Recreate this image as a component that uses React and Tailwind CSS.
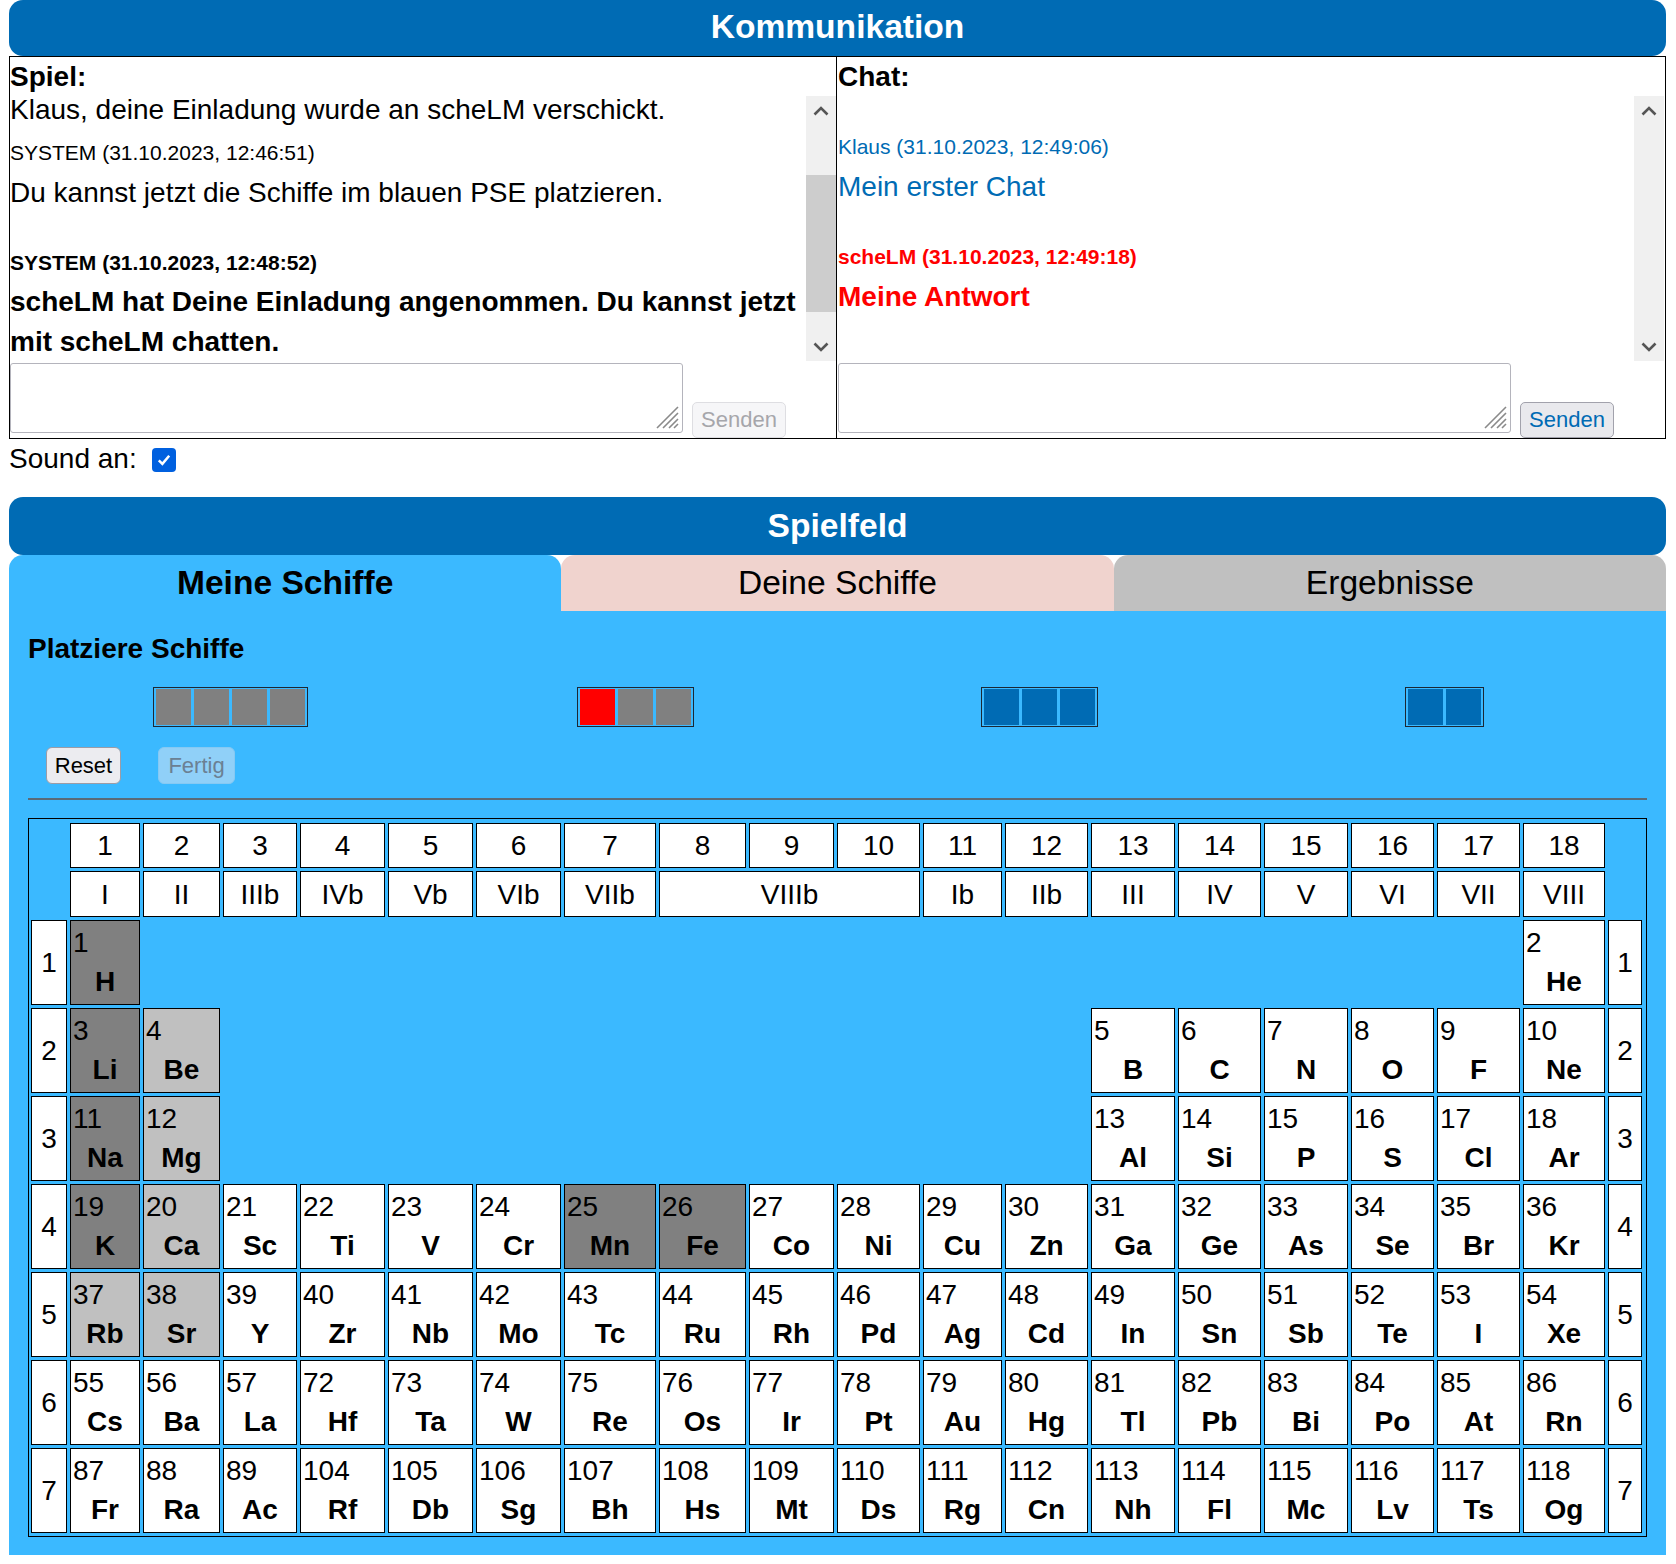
import React from 'react';

const DARK = new Set([1, 3, 11, 19, 25, 26]);
const LIGHT = new Set([4, 12, 20, 37, 38]);

const GROUPS = ['1', '2', '3', '4', '5', '6', '7', '8', '9', '10', '11', '12', '13', '14', '15', '16', '17', '18'];

const P4 = ['K', 'Ca', 'Sc', 'Ti', 'V', 'Cr', 'Mn', 'Fe', 'Co', 'Ni', 'Cu', 'Zn', 'Ga', 'Ge', 'As', 'Se', 'Br', 'Kr'];
const P5 = ['Rb', 'Sr', 'Y', 'Zr', 'Nb', 'Mo', 'Tc', 'Ru', 'Rh', 'Pd', 'Ag', 'Cd', 'In', 'Sn', 'Sb', 'Te', 'I', 'Xe'];
const P6 = ['Cs', 'Ba', 'La', 'Hf', 'Ta', 'W', 'Re', 'Os', 'Ir', 'Pt', 'Au', 'Hg', 'Tl', 'Pb', 'Bi', 'Po', 'At', 'Rn'];
const P7 = ['Fr', 'Ra', 'Ac', 'Rf', 'Db', 'Sg', 'Bh', 'Hs', 'Mt', 'Ds', 'Rg', 'Cn', 'Nh', 'Fl', 'Mc', 'Lv', 'Ts', 'Og'];

const seq = (syms, nums) => syms.map((s, i) => [nums[i], s]);
const range = (a, n) => Array.from({ length: n }, (_, i) => a + i);
const blanks = (n) => Array.from({ length: n }, () => null);

const PERIODS = [
  [[1, 'H'], ...blanks(16), [2, 'He']],
  [[3, 'Li'], [4, 'Be'], ...blanks(10), ...seq(['B', 'C', 'N', 'O', 'F', 'Ne'], range(5, 6))],
  [[11, 'Na'], [12, 'Mg'], ...blanks(10), ...seq(['Al', 'Si', 'P', 'S', 'Cl', 'Ar'], range(13, 6))],
  seq(P4, range(19, 18)),
  seq(P5, range(37, 18)),
  seq(P6, [55, 56, 57, ...range(72, 15)]),
  seq(P7, [87, 88, 89, ...range(104, 15)]),
];

const Chevron = ({ up }) => (
  <svg width="16" height="10" viewBox="0 0 16 10">
    <path d={up ? 'M1.5 8.5 L8 2 L14.5 8.5' : 'M1.5 1.5 L8 8 L14.5 1.5'} fill="none" stroke="#555" strokeWidth="2.6" />
  </svg>
);

const Scrollbar = ({ thumb }) => (
  <div className="w-[30px] h-[265px] self-end bg-[#f0f0f0] flex flex-col">
    <div className="h-[30px] flex items-center justify-center">
      <Chevron up />
    </div>
    {thumb && <div className="mt-[49px] h-[137px] bg-[#cdcdcd]" />}
    <div className="flex-1" />
    <div className="h-[28px] flex items-center justify-center">
      <Chevron />
    </div>
  </div>
);

const Grip = () => (
  <svg className="absolute right-[4px] bottom-[4px]" width="24" height="24" viewBox="0 0 24 24">
    <path d="M2 23 L23 2 M8 23 L23 8 M14 23 L23 14 M19 23 L23 19" stroke="#8a8a8a" strokeWidth="1.6" />
  </svg>
);

const InputRow = ({ enabled }) => (
  <div className="h-[77px] flex items-end gap-[9px]">
    <div className="relative w-[673px] h-[70px] mb-[5px]">
      <textarea readOnly className="w-full h-full resize-none border border-[#b4b4bc] rounded-[3px] bg-white outline-none" />
      <Grip />
    </div>
    <button
      className={
        enabled
          ? 'w-[94px] h-[36px] rounded-[5px] border border-[#a2a2ac] bg-[#e9e9ed] text-[#006bb4] text-[22px] leading-none'
          : 'w-[94px] h-[36px] rounded-[5px] border border-[#dedee2] bg-[#f6f6f8] text-[#a6a6ab] text-[22px] leading-none'
      }
    >
      Senden
    </button>
  </div>
);

const Ship = ({ cells }) => (
  <div className="flex gap-[3px] border border-[#1d2733] px-[2px] py-[1px]">
    {cells.map((c, i) => (
      <div key={i} className={`w-[35px] h-[36px] ${c}`} />
    ))}
  </div>
);

const cellBase = 'border border-black bg-white';

const ElementCell = ({ el }) => {
  if (!el) return <div />;
  const [num, sym] = el;
  const bg = DARK.has(num) ? 'bg-[#808080]' : LIGHT.has(num) ? 'bg-[#c0c0c0]' : 'bg-white';
  return (
    <div className={`border border-black ${bg} flex flex-col`}>
      <div className="pl-[2px] pt-[2px] leading-[39.2px]">{num}</div>
      <div className="text-center font-bold leading-[39.2px]">{sym}</div>
    </div>
  );
};

const PeriodCell = ({ n }) => (
  <div className={`${cellBase} flex items-center justify-center`}>{n}</div>
);

const HeadCell = ({ children, wide }) => (
  <div className={`${cellBase} flex items-center justify-center ${wide ? 'col-span-3' : ''}`}>{children}</div>
);

export default function App() {
  const romansA = ['I', 'II', 'IIIb', 'IVb', 'Vb', 'VIb', 'VIIb'];
  const romansB = ['Ib', 'IIb', 'III', 'IV', 'V', 'VI', 'VII', 'VIII'];

  return (
    <div className="w-[1676px] min-h-[1564px] bg-white text-black font-['Liberation_Sans',Arial,sans-serif]">
      <div className="ml-[9px] w-[1657px]">
        {/* Kommunikation */}
        <div className="h-[56px] rounded-[14px] bg-[#006bb4] flex items-center justify-center pb-[1px] text-white font-bold text-[33.6px]">
          Kommunikation
        </div>

        <div className="h-[383px] border border-black flex">
          {/* Spiel */}
          <div className="w-[827px] border-r border-black flex flex-col">
            <div className="h-[35px] text-[28px] font-bold leading-[39.2px]">Spiel:</div>
            <div className="h-[269px] flex">
              <div className="flex-1 h-[269px] overflow-hidden">
                <div className="whitespace-nowrap">
                  <div className="mt-[2px] text-[28px] leading-[31.3px]">Klaus, deine Einladung wurde an scheLM verschickt.</div>
                  <div className="mt-[13px] text-[21px] leading-[29.4px]">SYSTEM (31.10.2023, 12:46:51)</div>
                  <div className="mt-[5px] text-[28px] leading-[39.2px]">Du kannst jetzt die Schiffe im blauen PSE platzieren.</div>
                  <div className="mt-[36px] text-[21px] leading-[29.4px] font-bold">SYSTEM (31.10.2023, 12:48:52)</div>
                  <div className="mt-[5px] text-[28px] leading-[39.2px] font-bold">
                    scheLM hat Deine Einladung angenommen. Du kannst jetzt
                    <br />
                    mit scheLM chatten.
                  </div>
                </div>
              </div>
              <Scrollbar thumb />
            </div>
            <InputRow />
          </div>

          {/* Chat */}
          <div className="w-[827px] flex flex-col pl-[1px]">
            <div className="h-[35px] text-[28px] font-bold leading-[39.2px]">Chat:</div>
            <div className="h-[269px] flex">
              <div className="flex-1 h-[269px] overflow-hidden">
                <div className="pt-[40px] whitespace-nowrap">
                  <div className="text-[21px] leading-[29.4px] text-[#006bb4]">Klaus (31.10.2023, 12:49:06)</div>
                  <div className="mt-[6px] text-[28px] leading-[39.2px] text-[#006bb4]">Mein erster Chat</div>
                  <div className="mt-[35px] text-[21px] leading-[29.4px] font-bold text-[#ff0000]">scheLM (31.10.2023, 12:49:18)</div>
                  <div className="mt-[6px] text-[28px] leading-[39.2px] font-bold text-[#ff0000]">Meine Antwort</div>
                </div>
              </div>
              <Scrollbar />
            </div>
            <InputRow enabled />
          </div>
        </div>

        {/* Sound */}
        <div className="h-[39px] flex items-center gap-[15px] text-[28px] leading-[39.2px]">
          <span>Sound an:</span>
          <span className="mt-[3px] w-[24px] h-[24px] rounded-[4px] bg-[#0060df] flex items-center justify-center">
            <svg width="16" height="16" viewBox="0 0 16 16">
              <path d="M2.8 8.3 L6.4 11.9 L13.2 3.8" fill="none" stroke="white" strokeWidth="2.5" />
            </svg>
          </span>
        </div>

        {/* Spielfeld */}
        <div className="mt-[19px] h-[58px] rounded-[14px] bg-[#006bb4] flex items-center justify-center text-white font-bold text-[33.6px]">
          Spielfeld
        </div>

        <div className="flex h-[56px] text-[33.6px]">
          <div className="flex-1 rounded-t-[14px] bg-[#3bb9ff] flex items-center justify-center font-bold">Meine Schiffe</div>
          <div className="flex-1 rounded-t-[14px] bg-[#f0d3ce] flex items-center justify-center">Deine Schiffe</div>
          <div className="flex-1 rounded-t-[14px] bg-[#c0c0c0] flex items-center justify-center">Ergebnisse</div>
        </div>

        <div className="bg-[#3bb9ff] px-[19px] pt-[18px] pb-[18px] text-[28px]">
          <div className="font-bold leading-[39.2px]">Platziere Schiffe</div>

          <div className="mt-[19px] grid grid-cols-4 h-[40px]">
            <div className="flex justify-center">
              <Ship cells={['bg-[#808080]', 'bg-[#808080]', 'bg-[#808080]', 'bg-[#808080]']} />
            </div>
            <div className="flex justify-center">
              <Ship cells={['bg-[#ff0000]', 'bg-[#808080]', 'bg-[#808080]']} />
            </div>
            <div className="flex justify-center">
              <Ship cells={['bg-[#006bb4]', 'bg-[#006bb4]', 'bg-[#006bb4]']} />
            </div>
            <div className="flex justify-center">
              <Ship cells={['bg-[#006bb4]', 'bg-[#006bb4]']} />
            </div>
          </div>

          <div className="mt-[20px] ml-[18px] flex gap-[37px]">
            <button className="w-[75px] h-[37px] rounded-[6px] border border-[#9c9ca6] bg-[#ececf0] text-[22px] leading-none text-black">
              Reset
            </button>
            <button className="w-[77px] h-[37px] rounded-[6px] border border-[#86c9f3] bg-[#90d0f8] text-[22px] leading-none text-[#6b8093]">
              Fertig
            </button>
          </div>

          <div className="mt-[14px] h-[2px] bg-[#5a6a77]" />

          <div className="mt-[18px] grid grid-cols-[36px_70px_77px_74px_85px_85px_85px_92px_87px_85px_83px_79px_83px_84px_83px_84px_83px_83px_82px_34px] grid-rows-[45px_46px_repeat(7,85px)] gap-[3px] border border-black px-[2px] pt-[4px] pb-[3px] leading-[39.2px]">
            <div />
            {GROUPS.map((g) => (
              <HeadCell key={g}>{g}</HeadCell>
            ))}
            <div />

            <div />
            {romansA.map((r) => (
              <HeadCell key={r}>{r}</HeadCell>
            ))}
            <HeadCell wide>VIIIb</HeadCell>
            {romansB.map((r) => (
              <HeadCell key={r}>{r}</HeadCell>
            ))}
            <div />

            {PERIODS.map((row, p) => (
              <React.Fragment key={p}>
                <PeriodCell n={p + 1} />
                {row.map((el, i) => (
                  <ElementCell key={i} el={el} />
                ))}
                <PeriodCell n={p + 1} />
              </React.Fragment>
            ))}
          </div>
        </div>
      </div>
    </div>
  );
}
